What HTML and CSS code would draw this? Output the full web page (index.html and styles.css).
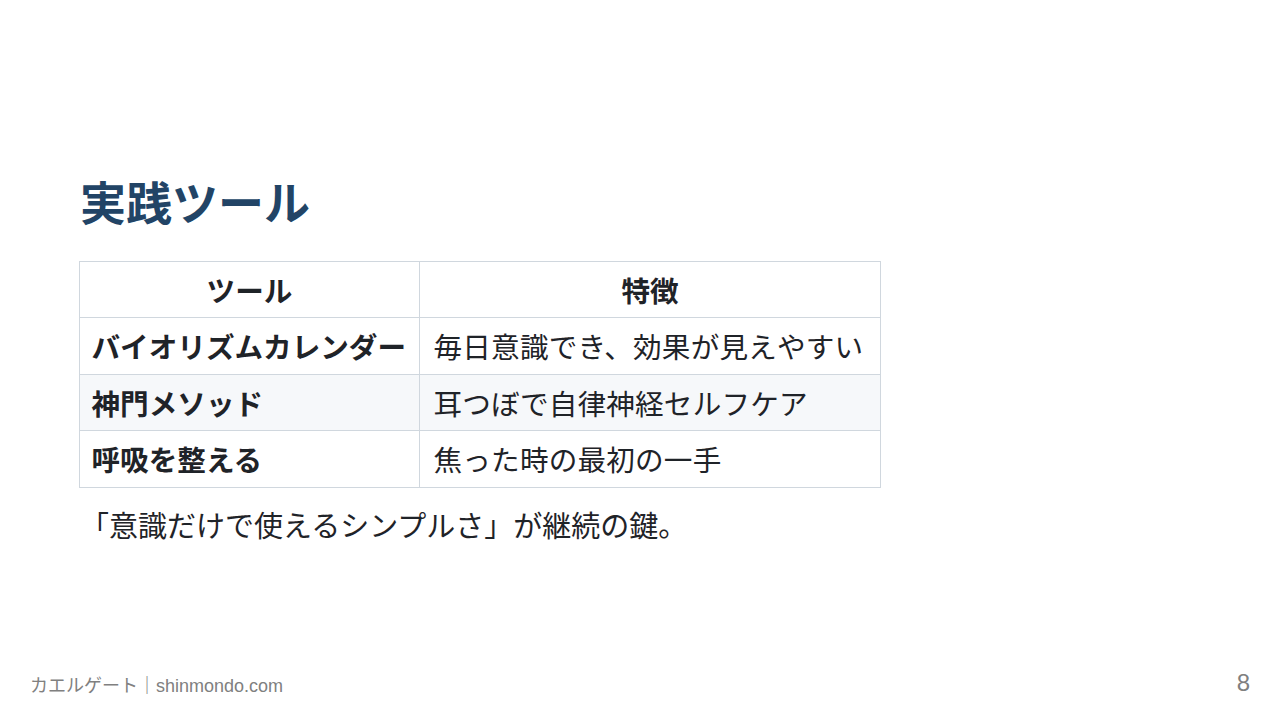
FILE: index.html
```html
<!DOCTYPE html>
<html lang="ja">
<head>
<meta charset="utf-8">
<link rel="stylesheet" href="styles.css">
</head>
<body>
<section class="slide">
  <div class="content">
    <h2 class="title">実践ツール</h2>
    <table class="tools">
      <colgroup>
        <col class="col-tool">
        <col class="col-feature">
      </colgroup>
      <thead>
        <tr><th>ツール</th><th>特徴</th></tr>
      </thead>
      <tbody>
        <tr><td class="name">バイオリズムカレンダー</td><td class="desc">毎日意識でき、効果が見えやすい</td></tr>
        <tr class="alt"><td class="name">神門メソッド</td><td class="desc">耳つぼで自律神経セルフケア</td></tr>
        <tr><td class="name">呼吸を整える</td><td class="desc">焦った時の最初の一手</td></tr>
      </tbody>
    </table>
    <p class="note">「意識だけで使えるシンプルさ」が継続の鍵。</p>
  </div>
  <footer class="footer">
    <span class="brand">カエルゲート｜shinmondo.com</span>
    <span class="page">8</span>
  </footer>
</section>
</body>
</html>
```

FILE: styles.css
```css
html, body {
  margin: 0;
  padding: 0;
  background: #ffffff;
}

.slide {
  width: 1280px;
  height: 720px;
  box-sizing: border-box;
  position: relative;
  display: flex;
  flex-direction: column;
  justify-content: center;
  padding: 0 80px 4px 79px;
  font-family: "Noto Sans CJK JP", "Noto Sans", sans-serif;
  color: #1f2328;
  overflow: hidden;
}

.content {
  display: flex;
  flex-direction: column;
  align-items: flex-start;
}

.title {
  margin: 0 0 31px 1px;
  font-size: 46px;
  line-height: 1.25;
  font-weight: 700;
  color: #224466;
}

.tools {
  border-collapse: collapse;
  table-layout: fixed;
  width: 801px;
  font-size: 28.6px;
  line-height: 39.5px;
}

.col-tool {
  width: 340px;
}

.col-feature {
  width: 461px;
}

.tools th,
.tools td {
  border: 1px solid #d0d7de;
  padding: 8px 12px;
  white-space: nowrap;
}

.tools th {
  font-weight: 700;
  text-align: center;
}

.tools td.name {
  font-weight: 700;
  padding-left: 11.5px;
}

.tools td.desc {
  padding-left: 13.5px;
  letter-spacing: 0.2px;
}

.tools tr.alt {
  background: #f6f8fa;
}

.note {
  margin: 16px 0 0 1px;
  font-size: 29px;
  line-height: 40px;
}

.footer {
  position: absolute;
  left: 30px;
  right: 30px;
  bottom: 22px;
  display: flex;
  justify-content: space-between;
  align-items: flex-end;
  color: #808080;
}

.brand {
  font-family: "Liberation Sans", "Noto Sans CJK JP", sans-serif;
  font-size: 18px;
  line-height: 24px;
}

.page {
  font-family: "Liberation Sans", sans-serif;
  font-size: 24px;
  line-height: 28px;
  margin-bottom: 1px;
}
```
